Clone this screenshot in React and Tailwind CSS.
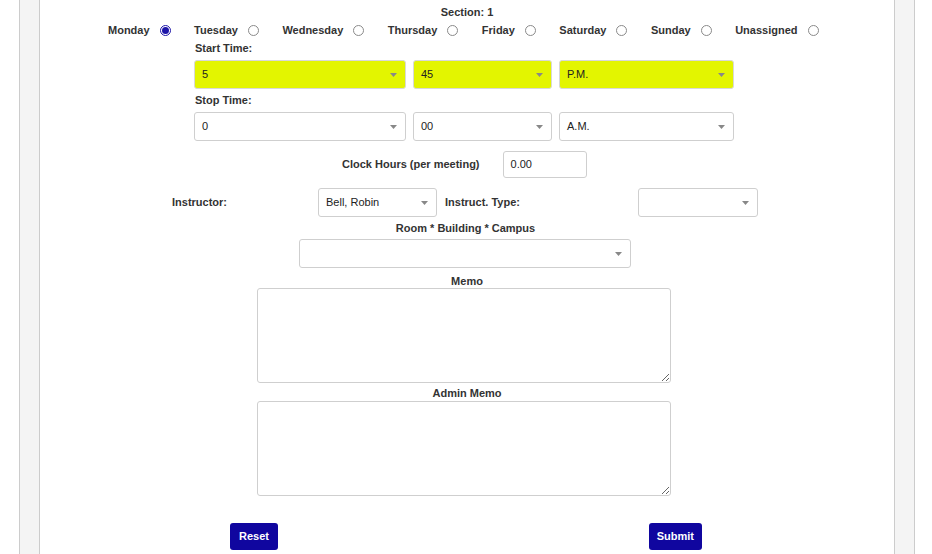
import React from 'react';

const days = ['Monday', 'Tuesday', 'Wednesday', 'Thursday', 'Friday', 'Saturday', 'Sunday', 'Unassigned'];

const Arrow = () => (
  <svg width="7" height="4" viewBox="0 0 7 4" className="shrink-0">
    <path d="M0 0 L7 0 L3.5 4 Z" fill="#888" />
  </svg>
);

const Select = ({ value, className = '' }) => (
  <div className={`flex items-center justify-between rounded-[3px] border border-[#cfcfcf] pl-[7px] pr-[8px] text-[11px] text-[#222] ${className}`}>
    <span>{value}</span>
    <Arrow />
  </div>
);

const Radio = ({ checked }) =>
  checked ? (
    <span className="flex h-[11px] w-[11px] items-center justify-center rounded-full border border-[#1d15a8] bg-white">
      <span className="h-[7px] w-[7px] rounded-full bg-[#1d15a8]" />
    </span>
  ) : (
    <span className="h-[11px] w-[11px] rounded-full border border-[#8a8a8a] bg-white" />
  );

export default function App() {
  return (
    <div className="h-[554px] overflow-hidden bg-white" style={{ fontFamily: '"Liberation Sans", Arial, sans-serif' }}>
      <div className="ml-[19px] h-full w-[896px] border-x border-[#cccccc] bg-[#f4f4f4] px-[19px]">
        <div className="h-full border-x border-[#cccccc] bg-white pt-[4px] text-[#333]">
          <div className="h-[16px] text-center text-[11px] font-bold leading-[16px]">Section: 1</div>

          <div className="mt-[2px] flex h-[16px] items-center pl-[68px] text-[11px] font-bold">
            {days.map((d, i) => (
              <div key={d} className="mr-[23.5px] flex items-center gap-[10px]">
                <span>{d}</span>
                <Radio checked={i === 0} />
              </div>
            ))}
          </div>

          <div className="ml-[154px] w-[540px]">
            <div className="mt-[2px] h-[16px] pl-[1px] text-[11px] font-bold leading-[16px]">Start Time:</div>
            <div className="mt-[4px] flex gap-[7px]">
              <Select value="5" className="h-[29px] w-[212px] bg-[#e3f500] border-[#d8d8d8]" />
              <Select value="45" className="h-[29px] w-[139px] bg-[#e3f500] border-[#d8d8d8]" />
              <Select value="P.M." className="h-[29px] w-[175px] bg-[#e3f500] border-[#d8d8d8]" />
            </div>
            <div className="mt-[3px] h-[16px] pl-[1px] text-[11px] font-bold leading-[16px]">Stop Time:</div>
            <div className="mt-[4px] flex gap-[7px]">
              <Select value="0" className="h-[29px] w-[212px] bg-white" />
              <Select value="00" className="h-[29px] w-[139px] bg-white" />
              <Select value="A.M." className="h-[29px] w-[175px] bg-white" />
            </div>
          </div>

          <div className="ml-[302px] mt-[10px] flex items-center gap-[23px]">
            <span className="text-[11px] font-bold">Clock Hours (per meeting)</span>
            <div className="flex h-[27px] w-[84px] items-center rounded-[3px] border border-[#cfcfcf] pl-[7px] text-[11px] text-[#222]">
              0.00
            </div>
          </div>

          <div className="ml-[132px] mt-[10px] flex items-center">
            <span className="w-[146px] text-[11px] font-bold">Instructor:</span>
            <Select value="Bell, Robin" className="h-[29px] w-[119px] bg-white" />
            <span className="ml-[8px] w-[193px] text-[11px] font-bold">Instruct. Type:</span>
            <Select value="" className="h-[29px] w-[120px] bg-white" />
          </div>

          <div className="mt-[3px] h-[16px] pr-[3px] text-center text-[11px] font-bold leading-[16px]">Room * Building * Campus</div>
          <Select value="" className="ml-[259px] mt-[3px] h-[29px] w-[332px] bg-white" />

          <div className="mt-[6px] h-[14px] text-center text-[11px] font-bold leading-[14px]">Memo</div>
          <textarea className="ml-[217px] block h-[95px] w-[414px] rounded-[3px] border border-[#cfcfcf] bg-white" />

          <div className="mt-[3px] h-[15px] text-center text-[11px] font-bold leading-[15px]">Admin Memo</div>
          <textarea className="ml-[217px] block h-[95px] w-[414px] rounded-[3px] border border-[#cfcfcf] bg-white" />

          <div className="mt-[27px] flex justify-between pl-[190px] pr-[192px]">
            <button className="h-[27px] rounded-[3px] bg-[#10069f] px-[9px] text-[11px] font-bold text-white">Reset</button>
            <button className="h-[27px] rounded-[3px] bg-[#10069f] px-[8px] text-[11px] font-bold text-white">Submit</button>
          </div>
        </div>
      </div>
    </div>
  );
}
